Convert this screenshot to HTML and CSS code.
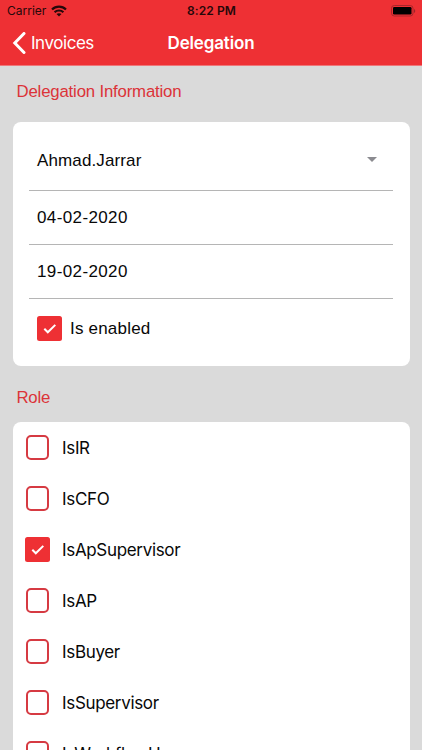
FILE: index.html
```html
<!DOCTYPE html>
<html lang="en">
<head>
<meta charset="utf-8">
<meta name="viewport" content="width=device-width, initial-scale=1">
<title>Delegation</title>
<link rel="stylesheet" href="styles.css">
</head>
<body>
<header class="header">
  <div class="status">
    <div class="carrier"><span>Carrier</span>
      <svg class="wifi" viewBox="0 0 16 12" width="16" height="12"><g fill="none" stroke="#26080a" stroke-width="2.200"><path d="M1 4.600C4.800.7 11.200.7 15 4.600"/><path d="M3.600 7.300c2.400-2.400 6.400-2.400 8.800 0"/></g><path fill="#26080a" d="M5.500 9.100c1.400-1.300 3.600-1.300 5 0L8 11.600z"/></svg>
    </div>
    <div class="time">8:22 PM</div>
    <svg class="battery" viewBox="0 0 25 12" width="25" height="12"><rect x=".5" y=".5" width="21.500" height="10.500" rx="2.800" fill="none" stroke="#a8262b"/><rect x="2" y="2" width="18.500" height="7.500" rx="1.300"/><path d="M23.200 4v4c1.300-.6 1.300-3.400 0-4z" fill="#8d2025"/></svg>
  </div>
  <nav class="nav">
    <a class="back"><svg viewBox="0 0 14 22" width="14" height="22"><path d="M12 1.500 2.800 11l9.200 9.500" fill="none" stroke="#fff" stroke-width="3" stroke-linecap="round"/></svg><span>Invoices</span></a>
    <h1 class="title">Delegation</h1>
  </nav>
</header>
<main>
  <h2 class="heading info"><span>Delegation Information</span></h2>
  <section class="card form">
    <div class="field select"><span class="name">Ahmad.Jarrar</span><svg viewBox="0 0 10 5" width="10" height="5"><path d="M0 0h10L5 5z" fill="#8b8b90"/></svg></div>
    <div class="field"><span class="date">04-02-2020</span></div>
    <div class="field"><span class="date">19-02-2020</span></div>
    <div class="enabled"><span class="box checked"><svg viewBox="0 0 25 25" width="25" height="25"><path d="m7.300 12.800 3.500 3.500 7.500-7.400"/></svg></span><span class="enabled-label">Is enabled</span></div>
  </section>
  <h2 class="heading role"><span>Role</span></h2>
  <section class="card roles">
    <div class="row"><span class="box"></span><span class="label">IsIR</span></div>
    <div class="row"><span class="box"></span><span class="label">IsCFO</span></div>
    <div class="row"><span class="box checked"><svg viewBox="0 0 25 25" width="25" height="25"><path d="m7.300 12.800 3.500 3.500 7.500-7.400"/></svg></span><span class="label">IsApSupervisor</span></div>
    <div class="row"><span class="box"></span><span class="label">IsAP</span></div>
    <div class="row"><span class="box"></span><span class="label">IsBuyer</span></div>
    <div class="row"><span class="box"></span><span class="label">IsSupervisor</span></div>
    <div class="row"><span class="box"></span><span class="label">IsWorkflowUser</span></div>
  </section>
</main>
</body>
</html>
```
FILE: styles.css
```css
* { box-sizing: border-box; }
html, body { height: 100%; }
body {
  margin: 0;
  height: 750px;
  overflow: hidden;
  background: #dadada;
  color: #080808;
  font-family: "Liberation Sans", Arial, sans-serif;
  font-size: 17px;
}
svg { display: block; flex: none; }
.header { height: 66px; background: #ee3034; border-bottom: 1px solid #ee7679; font-family: Inter, sans-serif; }
.status {
  height: 22px;
  padding: 0 6px 1px 7px;
  display: grid;
  grid-template-columns: 1fr auto 1fr;
  align-items: center;
  font-size: 12px;
  color: #26080a;
}
.carrier { display: flex; align-items: center; gap: 5px; letter-spacing: 0; }
.time { font-weight: 600; letter-spacing: .1px; }
.battery { justify-self: end; }
.nav {
  height: 42px;
  padding: 0 12px;
  display: grid;
  grid-template-columns: 1fr auto 1fr;
  align-items: center;
  color: #fff;
}
.back { display: flex; align-items: center; gap: 5px; font-size: 17px; letter-spacing: -.45px; }
.title { margin: 0; font-size: 17px; font-weight: 600; letter-spacing: -.15px; }
main { padding: 0 12.500px; }
.heading { margin: 0; padding-left: 4px; display: flex; align-items: center; font-size: 16.800px; font-weight: 400; color: #dc3338; }
.info { height: 55.500px; padding-bottom: 3px; letter-spacing: -.18px; }
.role { height: 55.500px; padding-top: 8.500px; letter-spacing: -.25px; }
.card { background: #fff; border-radius: 8px; }
.form { height: 244.500px; padding: 0 16.500px; }
.field { height: 54px; padding: 0 8px; display: flex; align-items: center; justify-content: space-between; border-bottom: 1px solid #b5b5b5; }
.select { height: 69px; padding: 8px 16px 0 8px; }
.name { padding-top: 2px; letter-spacing: .12px; }
.date { padding-top: 2px; letter-spacing: .38px; }
.enabled { height: 59px; padding-left: 8px; display: flex; align-items: center; gap: 8px; }
.enabled-label { padding-top: 2px; letter-spacing: .2px; }
.box { width: 23px; height: 25px; margin: 0 1px; flex: none; border: 2px solid #d63a42; border-radius: 5px; }
.checked { width: 25px; margin: 0; border: 0; border-radius: 2.500px; background: #ee3034; }
.checked path { fill: none; stroke: #fff; stroke-width: 2; }
.roles { height: 328.500px; padding-left: 12.500px; border-radius: 8px 8px 0 0; overflow: hidden; }
.row { height: 51px; display: flex; align-items: center; gap: 12px; font-family: Inter, sans-serif; letter-spacing: -.33px; }
.label { padding-top: 2px; }
```
